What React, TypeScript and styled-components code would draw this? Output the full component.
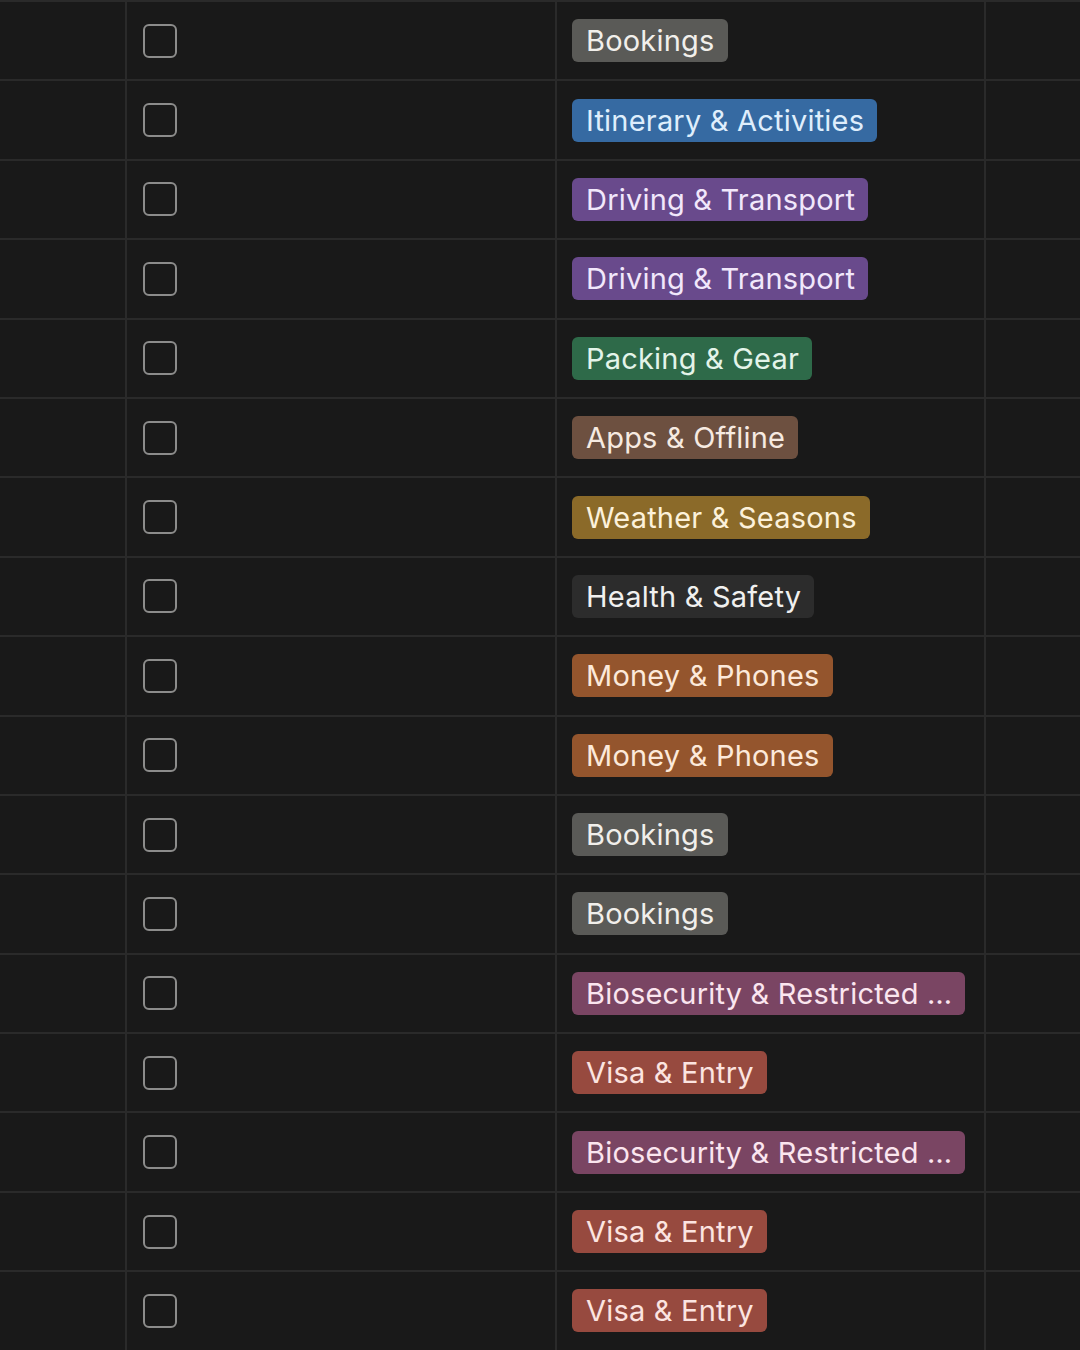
import React from "react"
import styled, { createGlobalStyle } from 'styled-components'

type TagColor = 'gray' | 'blue' | 'purple' | 'green' | 'brown' | 'yellow' | 'plain' | 'orange' | 'pink' | 'red'

const palette: Record<TagColor, { bg: string, fg: string }> = {
  gray: { bg: '#5a5a57', fg: '#f1efeb' },
  blue: { bg: '#366aa2', fg: '#dfeefc' },
  purple: { bg: '#694a8c', fg: '#f1e7fb' },
  green: { bg: '#2e6a49', fg: '#e3f4e9' },
  brown: { bg: '#6d5040', fg: '#f6eae1' },
  yellow: { bg: '#8b6a29', fg: '#fcf1da' },
  plain: { bg: '#2c2c2c', fg: '#f0f0ef' },
  orange: { bg: '#94552d', fg: '#fce9da' },
  pink: { bg: '#7a4563', fg: '#fbe5ef' },
  red: { bg: '#974a3f', fg: '#fce4e0' },
}

const rows: { label: string, color: TagColor }[] = [
  { label: 'Bookings', color: 'gray' },
  { label: 'Itinerary & Activities', color: 'blue' },
  { label: 'Driving & Transport', color: 'purple' },
  { label: 'Driving & Transport', color: 'purple' },
  { label: 'Packing & Gear', color: 'green' },
  { label: 'Apps & Offline', color: 'brown' },
  { label: 'Weather & Seasons', color: 'yellow' },
  { label: 'Health & Safety', color: 'plain' },
  { label: 'Money & Phones', color: 'orange' },
  { label: 'Money & Phones', color: 'orange' },
  { label: 'Bookings', color: 'gray' },
  { label: 'Bookings', color: 'gray' },
  { label: 'Biosecurity & Restricted …', color: 'pink' },
  { label: 'Visa & Entry', color: 'red' },
  { label: 'Biosecurity & Restricted …', color: 'pink' },
  { label: 'Visa & Entry', color: 'red' },
  { label: 'Visa & Entry', color: 'red' },
]

const App = () => (
  <>
    <GlobalStyle />
    <Table>
      {rows.map((r, i) => (
        <Row key={i}>
          <Cell />
          <CheckCell>
            <Checkbox type="checkbox" />
          </CheckCell>
          <TagCell>
            <Tag $color={r.color}>{r.label}</Tag>
          </TagCell>
          <Cell />
        </Row>
      ))}
    </Table>
  </>
)

export default App


const GlobalStyle = createGlobalStyle`
  html, body {
    margin: 0;
    padding: 0;
    background: #191919;
  }
  body {
    font-family: Inter, "Noto Sans", sans-serif;
    overflow: hidden;
  }
`
const Table = styled.div`
  width: 1080px;
  height: 1350px;
  overflow: hidden;
  border-top: 2px solid #2a2a2a;
  box-sizing: border-box;
`
const Row = styled.div`
  display: grid;
  grid-template-columns: 127px 430px 429px 1fr;
  height: 79.4px;
  box-sizing: border-box;
  border-bottom: 2px solid #2a2a2a;
`
const Cell = styled.div`
  border-right: 2px solid #2a2a2a;
  &:last-child {
    border-right: none;
  }
`
const CheckCell = styled(Cell)`
  display: flex;
  align-items: center;
  padding-left: 16px;
`
const TagCell = styled(Cell)`
  display: flex;
  align-items: center;
  padding-left: 15px;
`
const Checkbox = styled.input`
  appearance: none;
  margin: 0;
  width: 34px;
  height: 34px;
  border: 2px solid #8c8c8b;
  border-radius: 6px;
  background: transparent;
  box-sizing: border-box;
`
const Tag = styled.span<{ $color: TagColor }>`
  display: inline-block;
  height: 43px;
  line-height: 43px;
  padding: 0 13px 0 14px;
  border-radius: 6px;
  font-size: 29px;
  letter-spacing: 0.2px;
  white-space: nowrap;
  background: ${p => palette[p.$color].bg};
  color: ${p => palette[p.$color].fg};
`
